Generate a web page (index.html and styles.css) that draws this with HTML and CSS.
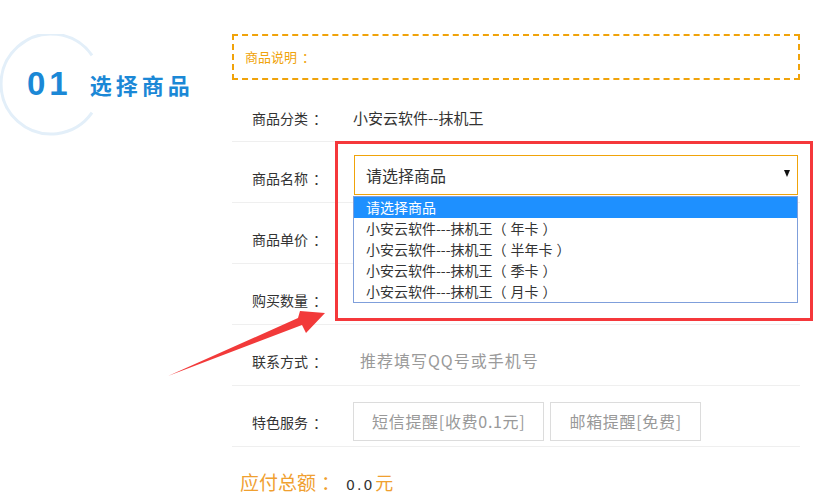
FILE: index.html
```html
<!DOCTYPE html>
<html lang="zh-CN">
<head>
<meta charset="utf-8">
<title>选择商品</title>
<link rel="stylesheet" href="styles.css">
</head>
<body>
<div class="page">
  <div class="side">
    <div class="step">
      <svg class="step-ring" width="110" height="110" viewBox="0 0 110 110">
        <path d="M92 21.3 A50 50 0 1 0 92 78.7" fill="none" stroke="#e3eff9" stroke-width="3"/>
      </svg>
      <span class="step-num">01</span>
      <span class="step-title">选择商品</span>
    </div>
  </div>
  <div class="form">
    <div class="notice">商品说明<span class="colon">：</span></div>
    <div class="row row-first">
      <span class="label">商品分类<span class="colon">：</span></span>
      <span class="value">小安云软件--抹机王</span>
    </div>
    <div class="row">
      <span class="label">商品名称<span class="colon">：</span></span>
      <div class="select-wrap">
        <div class="select">
          <span>请选择商品</span>
          <span class="caret"></span>
        </div>
        <ul class="options">
          <li class="active">请选择商品</li>
          <li>小安云软件---抹机王<span class="paren-open">（</span>年卡<span class="paren-close">）</span></li>
          <li>小安云软件---抹机王<span class="paren-open">（</span>半年卡<span class="paren-close">）</span></li>
          <li>小安云软件---抹机王<span class="paren-open">（</span>季卡<span class="paren-close">）</span></li>
          <li>小安云软件---抹机王<span class="paren-open">（</span>月卡<span class="paren-close">）</span></li>
        </ul>
      </div>
    </div>
    <div class="row">
      <span class="label">商品单价<span class="colon">：</span></span>
    </div>
    <div class="row">
      <span class="label">购买数量<span class="colon">：</span></span>
    </div>
    <div class="row">
      <span class="label">联系方式<span class="colon">：</span></span>
      <span class="placeholder">推荐填写QQ号或手机号</span>
    </div>
    <div class="row">
      <span class="label">特色服务<span class="colon">：</span></span>
      <div class="services">
        <span class="service">短信提醒[收费0.1元]</span>
        <span class="service">邮箱提醒[免费]</span>
      </div>
    </div>
    <div class="total">
      <span class="total-label">应付总额<span class="colon">：</span></span>
      <span class="total-num">0.0</span>
      <span class="total-unit">元</span>
    </div>
  </div>
  <div class="highlight-box"></div>
  <svg class="pointer" width="815" height="504" viewBox="0 0 815 504">
    <polygon points="168,376 298,318 300,311 325,313 306,333 302,325" fill="#f23a3a"/>
  </svg>
</div>
</body>
</html>
```
FILE: styles.css
```css
* { box-sizing: border-box; }
html, body { margin: 0; padding: 0; background: #fff; }
body {
  font-family: "Liberation Sans", "Noto Sans CJK SC", sans-serif;
  color: #333;
  width: 815px;
  height: 504px;
  overflow: hidden;
}
.page {
  position: relative;
  display: flex;
  width: 815px;
  height: 504px;
}
.side {
  width: 232px;
  flex: none;
  padding-top: 34px;
}
.step {
  position: relative;
  display: flex;
  align-items: center;
  height: 100px;
  padding-left: 27px;
}
.step-ring {
  position: absolute;
  left: 0;
  top: 0;
}
.step-num {
  position: relative;
  font-family: "Liberation Sans", Arial, sans-serif;
  font-weight: bold;
  font-size: 33px;
  letter-spacing: 4px;
  color: #1b88d6;
  line-height: 1;
  margin-top: -2px;
}
.step-title {
  position: relative;
  margin-left: 18px;
  font-family: "Noto Sans CJK SC", sans-serif;
  font-weight: bold;
  font-size: 22px;
  letter-spacing: 4px;
  color: #1b88d6;
  line-height: 1;
}
.colon { padding-left: 5px; }
.paren-open { padding-right: 4px; }
.paren-close { padding-left: 4px; }
.form {
  width: 568px;
  flex: none;
  padding-top: 34px;
  font-family: "Noto Sans CJK SC", sans-serif;
}
.notice {
  height: 46px;
  border: 2px dashed #f0a30a;
  padding-left: 11px;
  font-size: 13px;
  line-height: 42px;
  color: #f0a30a;
}
.row {
  display: flex;
  align-items: flex-start;
  height: 61px;
  border-bottom: 1px solid #efefef;
  padding-left: 20px;
}
.row-first { height: 62px; }
.label {
  width: 101px;
  flex: none;
  font-size: 14px;
  line-height: 20px;
  padding-top: 26px;
  color: #333;
  white-space: nowrap;
}
.row-first .label { padding-top: 28px; }
.value {
  font-size: 15px;
  line-height: 20px;
  padding-top: 28px;
  color: #333;
}
.select-wrap {
  position: relative;
  margin-top: 13px;
  margin-left: 1px;
  width: 444px;
}
.select {
  display: flex;
  align-items: center;
  justify-content: space-between;
  height: 40px;
  border: 1px solid #f0a30a;
  padding: 0 7px 0 11px;
  font-size: 16px;
  color: #333;
}
.caret {
  width: 0;
  height: 0;
  border-left: 3.5px solid transparent;
  border-right: 3.5px solid transparent;
  border-top: 7px solid #111;
  margin-top: -4px;
}
.options {
  position: absolute;
  left: -1px;
  top: 41px;
  width: 445px;
  margin: 0;
  padding: 0;
  list-style: none;
  border: 1px solid #7f9fdb;
  background: #fff;
  z-index: 2;
}
.options li {
  height: 21px;
  line-height: 21px;
  padding-left: 12px;
  font-size: 14px;
  color: #333;
  white-space: nowrap;
}
.options li.active {
  background: #1e90ff;
  color: #fff;
}
.placeholder {
  font-size: 16px;
  line-height: 20px;
  padding-top: 25px;
  padding-left: 7px;
  letter-spacing: 1px;
  color: #9a9a9a;
}
.services {
  display: flex;
  gap: 6px;
  margin-top: 16px;
}
.service {
  height: 39px;
  line-height: 37px;
  border: 1px solid #dcdcdc;
  padding: 0 18px;
  font-size: 16px;
  letter-spacing: 0.7px;
  color: #999;
}
.total {
  display: flex;
  align-items: baseline;
  padding-left: 8px;
  padding-top: 21px;
}
.total-label {
  font-size: 19px;
  color: #f0a030;
}
.total-num {
  font-family: "DejaVu Sans", sans-serif;
  font-size: 14px;
  letter-spacing: 2px;
  color: #333;
  margin-left: 6px;
}
.total-unit {
  font-size: 18px;
  color: #f0a030;
  margin-left: 1px;
}
.highlight-box {
  position: absolute;
  left: 335px;
  top: 141px;
  width: 478px;
  height: 180px;
  border: 3px solid #f5383b;
  z-index: 3;
  pointer-events: none;
}
.pointer {
  position: absolute;
  left: 0;
  top: 0;
  z-index: 4;
  pointer-events: none;
}
```
